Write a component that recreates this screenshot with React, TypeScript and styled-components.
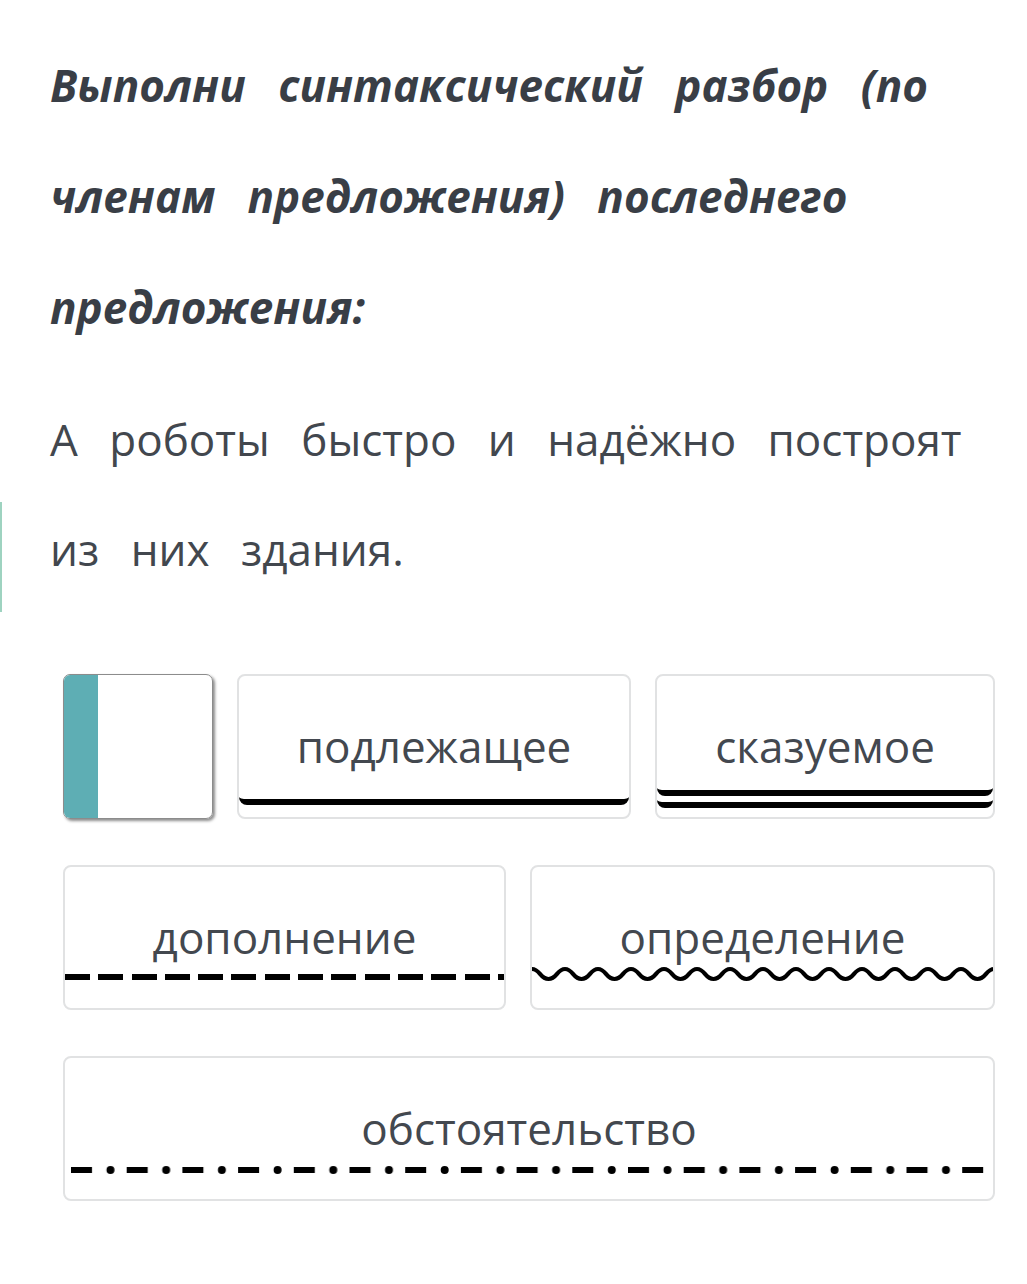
import React from "react";
import styled, { createGlobalStyle } from "styled-components";

const Global = createGlobalStyle`
  html, body {
    margin: 0;
    padding: 0;
    background: #ffffff;
  }
  body {
    font-family: "Open Sans", "Noto Sans", sans-serif;
  }
`;

const Page = styled.div`
  position: relative;
  width: 1027px;
  min-height: 1284px;
  padding: 30px 50px 0 50px;
  box-sizing: border-box;
`;

const Task = styled.h1`
  margin: 0;
  font-size: 44px;
  line-height: 111px;
  font-weight: 700;
  font-style: italic;
  color: #393e46;
  word-spacing: 21px;
`;

const Sentence = styled.p`
  position: relative;
  margin: 21px 0 0 0;
  font-size: 44px;
  line-height: 110px;
  font-weight: 400;
  color: #42474e;
  word-spacing: 20px;
`;

const Marker = styled.span`
  position: absolute;
  left: -50px;
  top: 118px;
  width: 2px;
  height: 110px;
  background: #9ed3c0;
`;

const Options = styled.div`
  display: flex;
  flex-wrap: wrap;
  gap: 46px 24px;
  width: 932px;
  margin: 70px 0 0 13px;
`;

const Card = styled.div<{ $w: number }>`
  width: ${(p) => p.$w}px;
  height: 145px;
  box-sizing: border-box;
  display: flex;
  flex-direction: column;
  border: 2px solid #e1e2e3;
  border-radius: 8px;
  background: #fff;
  overflow: hidden;
`;

const Swatch = styled.div`
  width: 150px;
  height: 145px;
  box-sizing: border-box;
  display: flex;
  border: 1px solid #8c8c8c;
  border-radius: 7px;
  overflow: hidden;
  box-shadow: 2px 2px 3px rgba(0, 0, 0, 0.45);
`;

const SwatchColor = styled.div`
  width: 34px;
  background: #5eaeb4;
`;

const Caption = styled.div`
  padding-top: 45px;
  font-size: 44px;
  line-height: 50px;
  text-align: center;
  color: #43484f;
`;

const Mark = styled.div<{ $bottom: number; $side?: number }>`
  margin: auto ${(p) => p.$side ?? 0}px ${(p) => p.$bottom}px;
`;

const Single = styled.div`
  height: 10px;
  border-bottom: 6px solid #000;
  border-radius: 0 0 8px 8px;
`;

const DoubleOuter = styled.div`
  padding-bottom: 6px;
  border-bottom: 6px solid #000;
  border-radius: 0 0 8px 8px;
`;

const Dashed = styled.div`
  height: 6px;
  background: repeating-linear-gradient(
    90deg,
    #000 0 25px,
    transparent 25px 33.3px
  );
`;

const Art = styled.svg`
  display: block;
  width: 100%;
`;

const Wave = () => (
  <Art height="18">
    <defs>
      <pattern id="wave" width="33" height="18" patternUnits="userSpaceOnUse">
        <path
          d="M0 4 C8 4 8 14 16.5 14 C25 14 25 4 33 4"
          fill="none"
          stroke="#000"
          strokeWidth="4.2"
        />
      </pattern>
    </defs>
    <rect width="100%" height="18" fill="url(#wave)" />
  </Art>
);

const DashDot = () => (
  <Art height="8">
    <defs>
      <pattern id="dashdot" width="55.7" height="8" patternUnits="userSpaceOnUse">
        <rect x="0" y="1" width="21" height="6" fill="#000" />
        <circle cx="39.5" cy="4" r="4" fill="#000" />
      </pattern>
    </defs>
    <rect width="100%" height="8" fill="url(#dashdot)" />
  </Art>
);

export default function App() {
  return (
    <>
      <Global />
      <Page>
        <Task>Выполни синтаксический разбор (по членам предложения) последнего предложения:</Task>
        <Sentence>
          <Marker />
          А роботы быстро и надёжно построят из них здания.
        </Sentence>
        <Options>
          <Swatch>
            <SwatchColor />
          </Swatch>
          <Card $w={394}>
            <Caption>подлежащее</Caption>
            <Mark $bottom={12}>
              <Single />
            </Mark>
          </Card>
          <Card $w={340}>
            <Caption>сказуемое</Caption>
            <Mark $bottom={9}>
              <DoubleOuter>
                <Single />
              </DoubleOuter>
            </Mark>
          </Card>
          <Card $w={443}>
            <Caption>дополнение</Caption>
            <Mark $bottom={28}>
              <Dashed />
            </Mark>
          </Card>
          <Card $w={465}>
            <Caption>определение</Caption>
            <Mark $bottom={25}>
              <Wave />
            </Mark>
          </Card>
          <Card $w={932}>
            <Caption>обстоятельство</Caption>
            <Mark $bottom={25} $side={6}>
              <DashDot />
            </Mark>
          </Card>
        </Options>
      </Page>
    </>
  );
}
